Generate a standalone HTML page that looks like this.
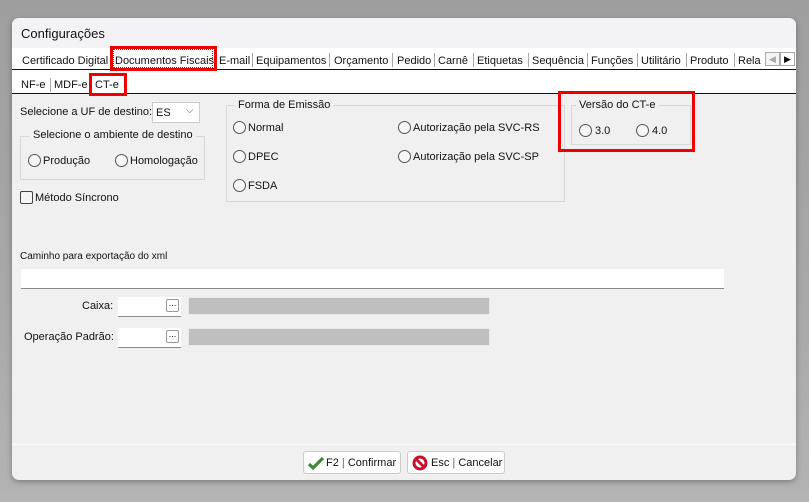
<!DOCTYPE html>
<html><head><meta charset="utf-8"><style>
*{margin:0;padding:0;box-sizing:border-box}
body{width:809px;height:502px;background:linear-gradient(#9e9e9e,#a8a8a8 60%,#b4b4b4);font-family:"Liberation Sans",sans-serif;font-size:11px;color:#111;position:relative;overflow:hidden}
.a{position:absolute;white-space:nowrap}
#win{position:absolute;left:12px;top:18px;width:784px;height:462px;background:#f0f0f0;border-radius:7px;overflow:hidden;box-shadow:0 2px 6px rgba(0,0,0,.3)}
.r{position:absolute;width:13px;height:13px;border:1px solid #555;border-radius:50%;background:#f6f6f6}
.sep{position:absolute;width:1px;height:14px;background:#aaa}
.red{position:absolute;border:3px solid #e00}
.grp{position:absolute;border:1px solid #d8d8d8}
</style></head><body>
<div id="win">
<div class="a" style="left:0;top:0;width:784px;height:30px;background:#f3f3f6"></div>
<div class="a" style="left:9px;top:8px;font-size:13px">Configurações</div>
<div class="a" style="left:0;top:30px;width:784px;height:45px;background:#fff"></div>
<div class="a" style="left:0;top:51px;width:784px;height:1px;background:#111"></div>
<div class="a" style="left:0;top:75px;width:784px;height:1px;background:#111"></div>
</div>
<!-- main tabs -->
<div class="a" style="left:22px;top:55px">Certificado Digital</div>
<div class="a" style="left:115px;top:55px">Documentos Fiscais</div>
<div class="a" style="left:113px;top:49px;width:100px;height:19px;border:1px dotted #444"></div>
<div class="a" style="left:219px;top:55px">E-mail</div>
<div class="sep" style="left:252px;top:53px"></div>
<div class="a" style="left:256px;top:55px">Equipamentos</div>
<div class="sep" style="left:329px;top:53px"></div>
<div class="a" style="left:334px;top:55px">Orçamento</div>
<div class="sep" style="left:392px;top:53px"></div>
<div class="a" style="left:397px;top:55px">Pedido</div>
<div class="sep" style="left:434px;top:53px"></div>
<div class="a" style="left:438px;top:55px">Carnê</div>
<div class="sep" style="left:473px;top:53px"></div>
<div class="a" style="left:477px;top:55px">Etiquetas</div>
<div class="sep" style="left:528px;top:53px"></div>
<div class="a" style="left:532px;top:55px">Sequência</div>
<div class="sep" style="left:587px;top:53px"></div>
<div class="a" style="left:591px;top:55px">Funções</div>
<div class="sep" style="left:637px;top:53px"></div>
<div class="a" style="left:641px;top:55px">Utilitário</div>
<div class="sep" style="left:686px;top:53px"></div>
<div class="a" style="left:690px;top:55px">Produto</div>
<div class="sep" style="left:734px;top:53px"></div>
<div class="a" style="left:738px;top:55px">Rela</div>
<div class="a" style="left:765px;top:52px;width:15px;height:14px;border:1px solid #aaa;background:#f4f4f4;color:#aaa;font-size:9px;text-align:center;line-height:12px">◀</div>
<div class="a" style="left:780px;top:52px;width:15px;height:14px;border:1px solid #aaa;background:#fff;font-size:9px;text-align:center;line-height:12px">▶</div>
<div class="red" style="left:110px;top:46px;width:107px;height:25px"></div>
<!-- sub tabs -->
<div class="a" style="left:21px;top:79px">NF-e</div>
<div class="sep" style="left:50px;top:78px"></div>
<div class="a" style="left:54px;top:79px">MDF-e</div>
<div class="a" style="left:95px;top:79px">CT-e</div>
<div class="red" style="left:89px;top:73px;width:38px;height:23px"></div>
<!-- left -->
<div class="a" style="left:20px;top:106px">Selecione a UF de destino:</div>
<div class="a" style="left:152px;top:102px;width:48px;height:21px;background:#fff;border:1px solid #ccc;padding:4px 0 0 3px">ES<span style="position:absolute;left:33px;top:2px;color:#555;font-size:10px">⌵</span></div>
<div class="grp" style="left:20px;top:136px;width:185px;height:44px"></div>
<div class="a" style="left:30px;top:129px;background:#f0f0f0;padding:0 3px">Selecione o ambiente de destino</div>
<div class="r" style="left:28px;top:154px"></div><div class="a" style="left:43px;top:155px">Produção</div>
<div class="r" style="left:115px;top:154px"></div><div class="a" style="left:130px;top:155px">Homologação</div>
<div class="a" style="left:20px;top:191px;width:13px;height:13px;border:1px solid #444;border-radius:2px;background:#f6f6f6"></div>
<div class="a" style="left:35px;top:192px">Método Síncrono</div>
<!-- forma -->
<div class="grp" style="left:226px;top:105px;width:339px;height:97px"></div>
<div class="a" style="left:235px;top:99px;background:#f0f0f0;padding:0 3px">Forma de Emissão</div>
<div class="r" style="left:233px;top:121px"></div><div class="a" style="left:248px;top:122px">Normal</div>
<div class="r" style="left:233px;top:150px"></div><div class="a" style="left:248px;top:151px">DPEC</div>
<div class="r" style="left:233px;top:179px"></div><div class="a" style="left:248px;top:180px">FSDA</div>
<div class="r" style="left:398px;top:121px"></div><div class="a" style="left:413px;top:122px">Autorização pela SVC-RS</div>
<div class="r" style="left:398px;top:150px"></div><div class="a" style="left:413px;top:151px">Autorização pela SVC-SP</div>
<!-- versao -->
<div class="grp" style="left:571px;top:105px;width:120px;height:40px"></div>
<div class="a" style="left:576px;top:99px;background:#f0f0f0;padding:0 3px">Versão do CT-e</div>
<div class="r" style="left:579px;top:124px"></div><div class="a" style="left:595px;top:125px">3.0</div>
<div class="r" style="left:636px;top:124px"></div><div class="a" style="left:652px;top:125px">4.0</div>
<div class="red" style="left:558px;top:91px;width:137px;height:61px"></div>
<!-- bottom fields -->
<div class="a" style="left:20px;top:251px;font-size:10px">Caminho para exportação do xml</div>
<div class="a" style="left:21px;top:269px;width:703px;height:20px;background:#fff;border-bottom:1px solid #888"></div>
<div class="a" style="left:82px;top:300px">Caixa:</div>
<div class="a" style="left:118px;top:297px;width:63px;height:20px;background:#fff;border-bottom:1px solid #888"></div>
<div class="a" style="left:166px;top:299px;width:13px;height:13px;border:1px solid #999;border-radius:2px;font-size:9px;line-height:7px;text-align:center;background:#fff">...</div>
<div class="a" style="left:188px;top:297px;width:302px;height:18px;background:#bfbfbf;border:1px solid #e8e8e8"></div>
<div class="a" style="left:24px;top:331px">Operação Padrão:</div>
<div class="a" style="left:118px;top:328px;width:63px;height:20px;background:#fff;border-bottom:1px solid #888"></div>
<div class="a" style="left:166px;top:330px;width:13px;height:13px;border:1px solid #999;border-radius:2px;font-size:9px;line-height:7px;text-align:center;background:#fff">...</div>
<div class="a" style="left:188px;top:328px;width:302px;height:18px;background:#bfbfbf;border:1px solid #e8e8e8"></div>
<!-- footer -->
<div class="a" style="left:12px;top:444px;width:784px;height:1px;background:#fafafa"></div>
<div class="a" style="left:303px;top:451px;width:98px;height:23px;background:#fff;border:1px solid #ccc;border-radius:3px;padding:5px 0 0 22px">F2 <span style="color:#3a6fb0">|</span> Confirmar
<svg style="position:absolute;left:4px;top:4px" width="16" height="14" viewBox="0 0 16 14"><path d="M1 8 L5 12 L15 2" stroke="#3f8a3a" stroke-width="3.2" fill="none"/></svg></div>
<div class="a" style="left:407px;top:451px;width:98px;height:23px;background:#fff;border:1px solid #ccc;border-radius:3px;padding:5px 0 0 23px">Esc <span style="color:#3a6fb0">|</span> Cancelar
<svg style="position:absolute;left:4px;top:3px" width="16" height="16" viewBox="0 0 16 16"><circle cx="8" cy="8" r="6" stroke="#c8102e" stroke-width="3" fill="#fff"/><path d="M4 4 L12 12" stroke="#c8102e" stroke-width="3"/></svg></div>
</body></html>
